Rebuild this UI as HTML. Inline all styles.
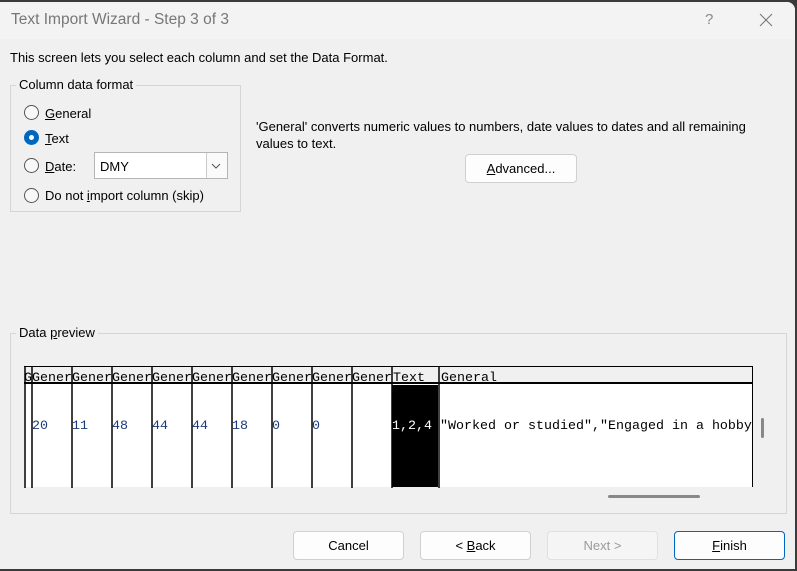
<!DOCTYPE html>
<html><head><style>
*{margin:0;padding:0;box-sizing:border-box}
body{width:797px;height:571px;background:#3a3a3a;font-family:"Liberation Sans",sans-serif;font-size:13px;color:#000;position:relative;overflow:hidden}
.win{position:absolute;left:0;top:2px;width:795px;height:567px;background:#f0f0f0;border-radius:0 8px 0 0;overflow:hidden}
.tb{position:absolute;left:0;top:0;width:795px;height:37px;background:#f3f3f3}
.a{position:absolute;white-space:nowrap}
.grp{position:absolute;border:1px solid #d5d5d5}
.leg{position:absolute;background:#f0f0f0;padding:0 3px;top:-9px;left:5px}
.rad{position:absolute;width:15px;height:15px;border:1px solid #555;border-radius:50%;background:#f8f8f8}
.btn{position:absolute;height:29px;width:111px;border:1px solid #d0d0d0;border-radius:4px;background:#fdfdfd;text-align:center;line-height:27px}
.mono{font-family:"Liberation Mono",monospace;font-size:13.33px}
u{text-decoration:underline}
</style></head><body>
<div class="win">
<div class="tb"></div>
<div class="a" style="left:11px;top:9px;font-size:15.5px;color:#777">Text Import Wizard - Step 3 of 3</div>
<div class="a" style="left:705px;top:9px;font-size:15px;color:#888">?</div>
<svg class="a" style="left:759px;top:11px" width="14" height="14"><path d="M1 1L13 13M13 1L1 13" stroke="#777" stroke-width="1.1"/></svg>
<div class="a" style="left:10px;top:48px">This screen lets you select each column and set the Data Format.</div>
<div class="grp" style="left:10px;top:83px;width:231px;height:127px">
<div class="leg">Column data format</div></div>
<div class="rad" style="left:24px;top:103px"></div>
<div class="a" style="left:45px;top:104px"><u>G</u>eneral</div>
<div class="rad" style="left:24px;top:128px;background:#0067c0;border-color:#0067c0"><div style="position:absolute;left:4px;top:4px;width:5px;height:5px;border-radius:50%;background:#fff"></div></div>
<div class="a" style="left:45px;top:129px"><u>T</u>ext</div>
<div class="rad" style="left:24px;top:156px"></div>
<div class="a" style="left:45px;top:157px"><u>D</u>ate:</div>
<div class="a" style="left:94px;top:150px;width:134px;height:27px;border:1px solid #b5b5b5;background:#fff"><span style="position:absolute;left:5px;top:6px">DMY</span>
<div style="position:absolute;right:0;top:0;width:21px;height:25px;border-left:1px solid #ccc;background:#fafafa"></div>
<svg style="position:absolute;right:6px;top:10px" width="10" height="6"><path d="M1 1L5 5L9 1" stroke="#555" fill="none"/></svg></div>
<div class="rad" style="left:24px;top:186px"></div>
<div class="a" style="left:45px;top:186px">Do not <u>i</u>mport column (skip)</div>
<div class="a" style="left:256px;top:116px;line-height:17px">'General' converts numeric values to numbers, date values to dates and all remaining<br>values to text.</div>
<div class="btn" style="left:465px;top:152px;width:112px"><u>A</u>dvanced...</div>
<div class="grp" style="left:10px;top:331px;width:777px;height:181px"><div class="leg">Data <u>p</u>review</div></div>
<div class="a" style="left:24px;top:364px;width:729px;height:121px;background:#fff;border-top:1px solid #000;border-right:1px solid #000;overflow:hidden">
<div style="position:absolute;left:0;top:0;width:729px;height:17px;background:#f0f0f0;border-bottom:2px solid #000"></div>
<div style="position:absolute;left:368px;top:18px;width:46px;height:110px;background:#000"></div>
</div>
<svg class="a" style="left:24px;top:364px" width="729" height="122">
<g stroke="#000" stroke-width="1.5">
<path d="M1 0V122M8 0V122M48 0V122M88 0V122M128 0V122M168 0V122M208 0V122M248 0V122M288 0V122M328 0V122M368 0V122M415 0V122"/>
</g></svg>
<div class="a mono" style="left:24px;top:369px">
<span style="position:absolute;left:0">G</span>
<span style="position:absolute;left:8px">Gener</span><span style="position:absolute;left:48px">Gener</span><span style="position:absolute;left:88px">Gener</span><span style="position:absolute;left:128px">Gener</span><span style="position:absolute;left:168px">Gener</span><span style="position:absolute;left:208px">Gener</span><span style="position:absolute;left:248px">Gener</span><span style="position:absolute;left:288px">Gener</span><span style="position:absolute;left:328px">Gener</span><span style="position:absolute;left:369px"><u>Text&nbsp;&nbsp;</u></span><span style="position:absolute;left:417px">General</span>
</div>
<div class="a mono" style="left:24px;top:417px;color:#1a3a7a">
<span style="position:absolute;left:8px">20</span><span style="position:absolute;left:48px">11</span><span style="position:absolute;left:88px">48</span><span style="position:absolute;left:128px">44</span><span style="position:absolute;left:168px">44</span><span style="position:absolute;left:208px">18</span><span style="position:absolute;left:248px">0</span><span style="position:absolute;left:288px">0</span><span style="position:absolute;left:368px;color:#fff">1,2,4</span><span style="position:absolute;left:416px;color:#000;width:312px;overflow:hidden">"Worked or studied","Engaged in a hobby</span>
</div>
<div class="a" style="left:761px;top:416px;width:3px;height:20px;background:#888;border-radius:2px"></div>
<div class="a" style="left:608px;top:493px;width:92px;height:3px;background:#888;border-radius:2px"></div>
<div class="btn" style="left:293px;top:529px">Cancel</div>
<div class="btn" style="left:420px;top:529px">&lt; <u>B</u>ack</div>
<div class="btn" style="left:547px;top:529px;color:#9a9a9a;background:#f5f5f5;border-color:#e0e0e0">Next &gt;</div>
<div class="btn" style="left:674px;top:529px;border-color:#0067c0"><u>F</u>inish</div>
</div>
</body></html>
